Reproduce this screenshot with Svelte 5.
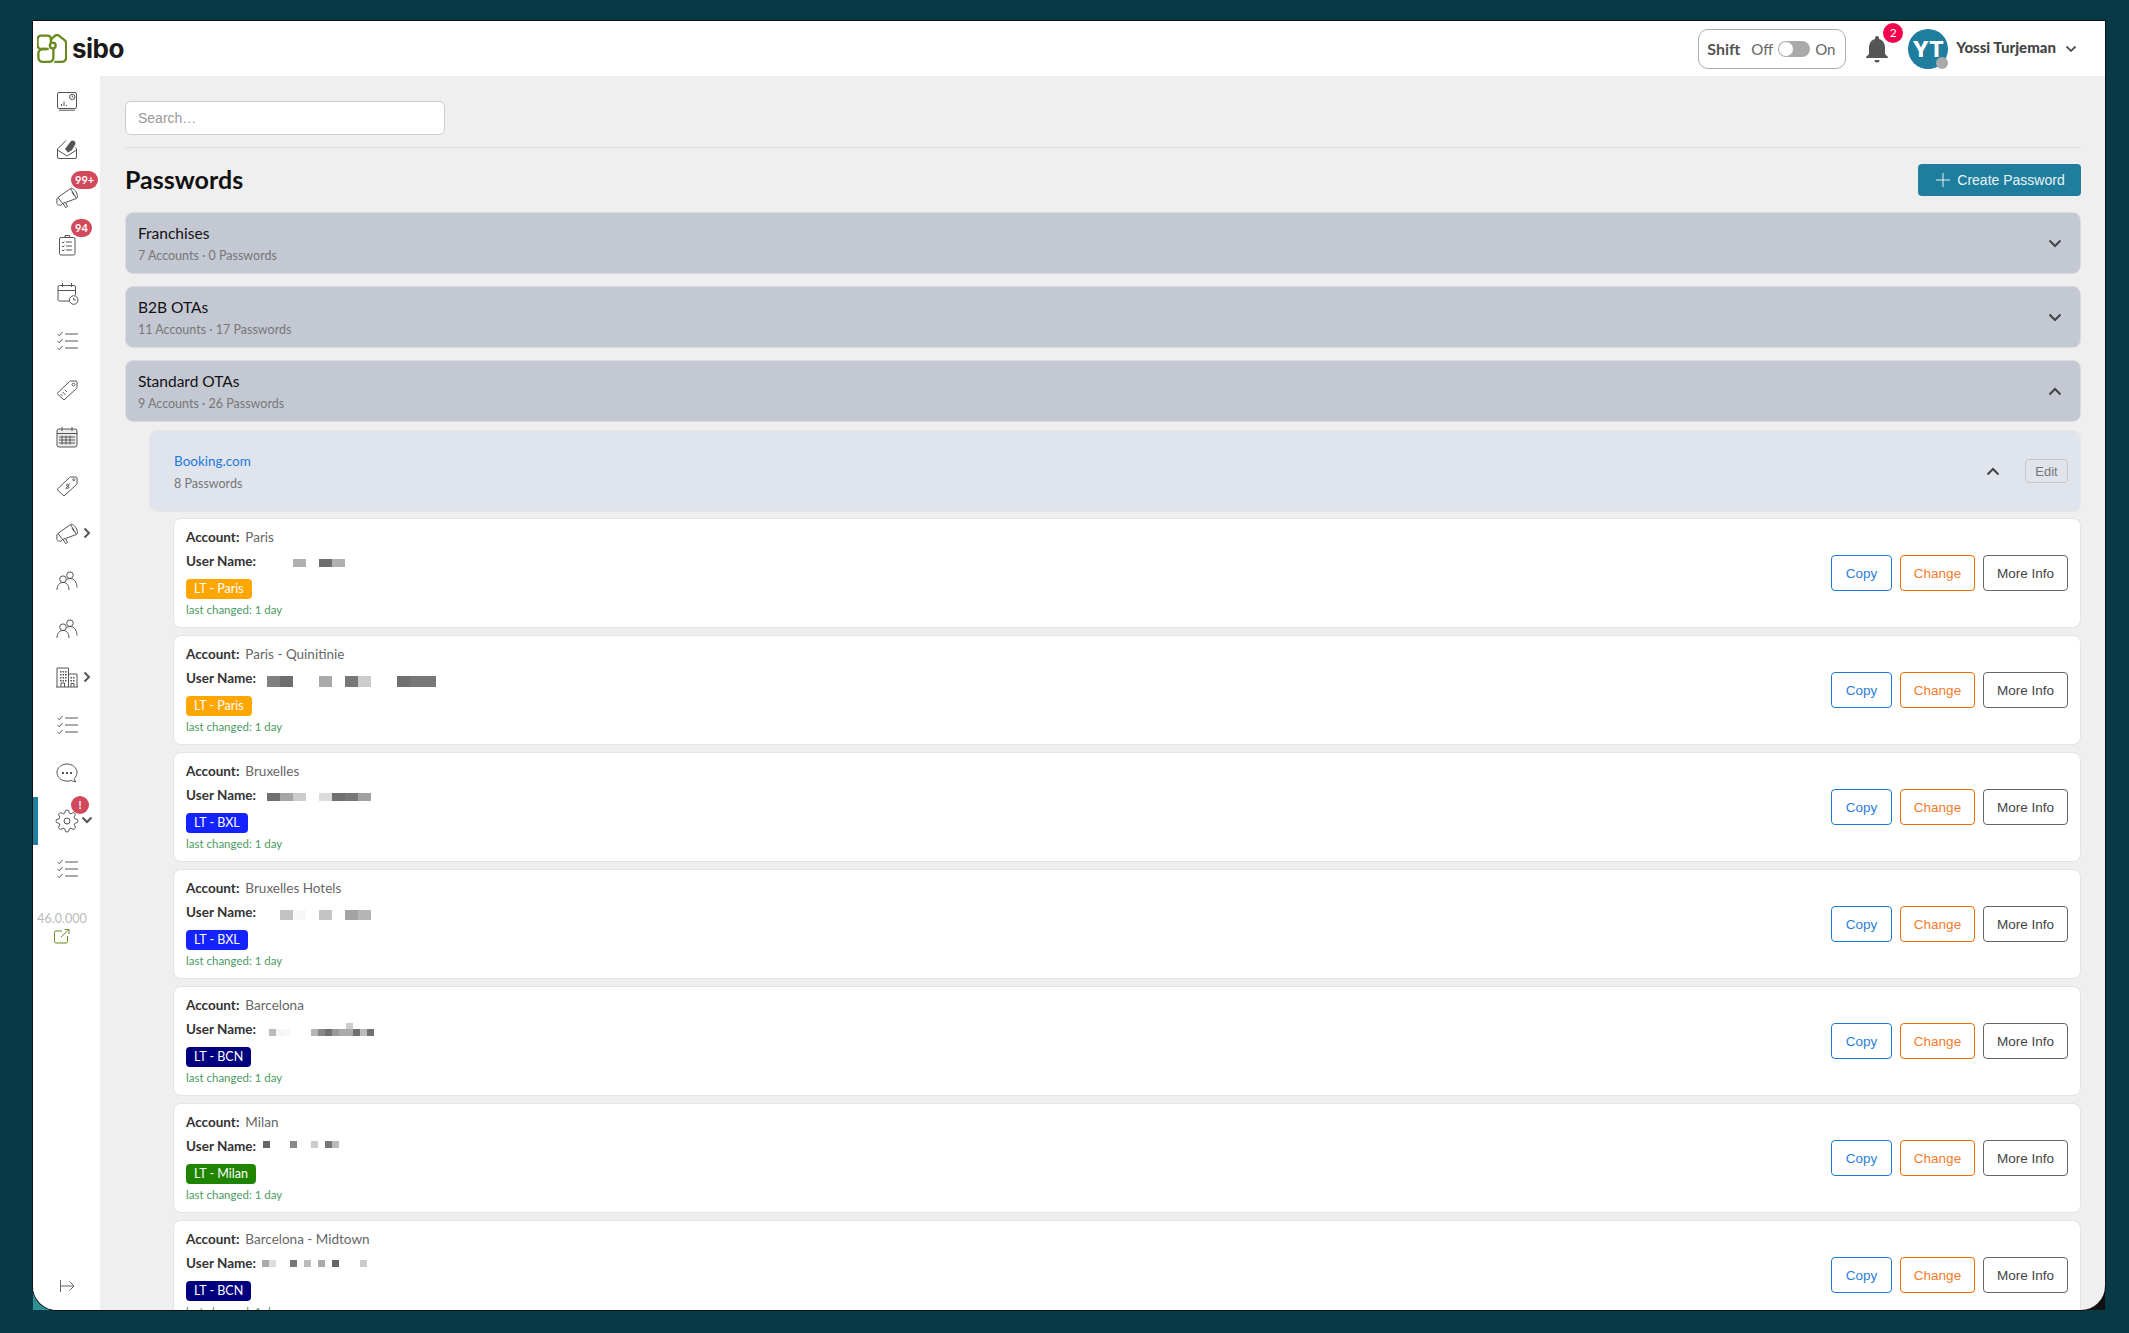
<script>
  const check = 'M10 5h13M10 12h13M10 19h13M2.500 5l1.700 1.700L7.500 3M2.500 12l1.700 1.700L7.500 10M2.500 19l1.700 1.700L7.500 17';
  const mega = 'M3 12.500L15.500 3.500l6 10L7.500 18.500zM15.500 3.500c1.500-1 4 1 5.500 3.500s2 5.500.500 6.500M3 12.500a3 3 0 0 0-1 3.500 3 3 0 0 0 5.500 2.500M8 18.500l2.500 4 2-1-2-4M17 7l2 3.500';
  const people = 'M2 21c0-5 2.500-7.500 6-7.500s6 2.500 6 7.500M8 13.500a3.300 3.300 0 1 0 0-6.600 3.300 3.300 0 0 0 0 6.600zM11.500 11c1-1 2.500-1.500 3.500-1.500 4 0 7 3.500 7 9M15 9.500a3.300 3.300 0 1 0 0-6.600 3.300 3.300 0 0 0 0 6.600z';
  const tagBase = 'M2 16.500L14.500 4.500a1.500 1.500 0 0 1 1-.5h5.500a1 1 0 0 1 1 1v5.500a1.500 1.500 0 0 1-.5 1L9 23z';
  const gear = 'M19.400 15a1.650 1.650 0 0 0 .33 1.820l.06.06a2 2 0 0 1 0 2.830 2 2 0 0 1-2.830 0l-.06-.06a1.650 1.650 0 0 0-1.820-.33 1.650 1.650 0 0 0-1 1.510V21a2 2 0 0 1-2 2 2 2 0 0 1-2-2v-.09A1.650 1.650 0 0 0 9 19.400a1.650 1.650 0 0 0-1.820.33l-.06.06a2 2 0 0 1-2.830 0 2 2 0 0 1 0-2.830l.06-.06a1.650 1.650 0 0 0 .33-1.820 1.650 1.650 0 0 0-1.510-1H3a2 2 0 0 1-2-2 2 2 0 0 1 2-2h.09A1.650 1.650 0 0 0 4.600 9a1.650 1.650 0 0 0-.33-1.820l-.06-.06a2 2 0 0 1 0-2.830 2 2 0 0 1 2.830 0l.06.06a1.650 1.650 0 0 0 1.820.33H9a1.650 1.650 0 0 0 1-1.510V3a2 2 0 0 1 2-2 2 2 0 0 1 2 2v.09a1.650 1.650 0 0 0 1 1.510 1.650 1.650 0 0 0 1.820-.33l.06-.06a2 2 0 0 1 2.830 0 2 2 0 0 1 0 2.830l-.06.06a1.650 1.650 0 0 0-.33 1.820V9a1.650 1.650 0 0 0 1.510 1H21a2 2 0 0 1 2 2 2 2 0 0 1-2 2h-.09a1.650 1.650 0 0 0-1.510 1zM15 12a3 3 0 1 1-6 0 3 3 0 1 1 6 0z';

  const nav = [
    { d: 'M2.500 5a1.500 1.500 0 0 1 1.500-1.500h16a1.500 1.500 0 0 1 1.500 1.500v13a1.500 1.500 0 0 1-1.500 1.500H4A1.500 1.500 0 0 1 2.500 18zM4 21.200h16M6.500 17v-2M9 17v-4.500M11.500 17v-1M20 8a2.700 2.700 0 1 1-5.400 0 2.700 2.700 0 0 1 5.400 0zM17.300 6.500V8l1 .5' },
    { d: 'M2.500 12v8a1.500 1.500 0 0 0 1.500 1.500h16a1.500 1.500 0 0 0 1.500-1.500v-8M2.500 12L11 3.500M2.500 13l9.500 6 9.500-6M21.500 12L20 10.500', fill: 'M10 12l6-8a3 3 0 0 1 4.500 3L17 13l-4 2.500z' },
    { d: mega, badge: '99+' },
    { d: 'M6 4.500h12.500A1.500 1.500 0 0 1 20 6v14.500a1.500 1.500 0 0 1-1.500 1.500H6a1.500 1.500 0 0 1-1.500-1.500V6A1.500 1.500 0 0 1 6 4.500zM10 4.500V2.500h4.500v2M11 9h6M11 13h6M11 17h6M7 9l1 1 1.500-1.500M7 13l1 1 1.500-1.500M7 17l1 1 1.500-1.500', badge: '94' },
    { d: 'M14 20H4.500A1.500 1.500 0 0 1 3 18.500V6a1.500 1.500 0 0 1 1.500-1.500h14.500A1.500 1.500 0 0 1 20.500 6v8M3 9.500h17.500M7.500 2v4M16.500 2v4M23 19a4.300 4.300 0 1 1-8.600 0 4.300 4.300 0 0 1 8.600 0zM18.700 16.800V19h2' },
    { d: check },
    { d: tagBase + 'M17.500 6.500a1 1 0 1 0 2 2 1 1 0 0 0-2-2zM7.500 15l3 3M10 13l2 2M5.500 17l2 2' },
    { d: 'M4 4h16a2 2 0 0 1 2 2v14a2 2 0 0 1-2 2H4a2 2 0 0 1-2-2V6a2 2 0 0 1 2-2zM2 8.500h20M7 2v4M17 2v4M4 12h16M4 15h16M4 18h16M7 10.500v9M11 10.500v9M15 10.500v9', tint: true },
    { d: tagBase + 'M18 6a1 1 0 1 0 1.500 1.500A1 1 0 0 0 18 6zM13.500 11.500c-1-1-2.700.2-1.800 1.300.8 1 2.700.300 2.300 1.800-.4 1-2 1-2.800.100M14.700 10.500l-4 5.500' },
    { d: mega, chev: 'right' },
    { d: people },
    { d: people },
    { d: 'M2 22V3h11.500v19M13.500 9H22v13M1 22h22M6 22v-4h3.500v4M16 22v-3.500h3V22', fill: 'M5 6h1.500v1.500H5zM7.500 6H9v1.500H7.500zM10 6h1.500v1.500H10zM5 9h1.500v1.500H5zM7.500 9H9v1.500H7.500zM10 9h1.500v1.500H10zM5 12h1.500v1.500H5zM7.500 12H9v1.500H7.500zM10 12h1.500v1.500H10zM5 15h1.500v1.500H5zM7.500 15H9v1.500H7.500zM10 15h1.500v1.500H10zM15.500 12H17v1.500h-1.500zM18 12h1.500v1.500H18zM15.500 15H17v1.500h-1.500zM18 15h1.500v1.500H18z', chev: 'right' },
    { d: check },
    { d: 'M12 3c5.500 0 10 3.800 10 8.500 0 2.500-1.200 4.500-2.800 6l1.500 3.500-4.700-1.500c-1.200.5-2.500.6-4 .6-5.500 0-10-3.800-10-8.600S6.500 3 12 3z', fill: 'M7 11h2v2H7zM11 11h2v2h-2zM15 11h2v2h-2z' },
    { d: gear, badge: '!', round: true, chev: 'down', active: true },
    { d: check }
  ];

  const cards = [
    { name: 'Paris', tag: 'LT - Paris', color: '#ffa600', m: [[31,8,13,8,'#b0b0b0'],[57,8,13,8,'#6e6e6e'],[70,8,13,8,'#b0b0b0']] },
    { name: 'Paris - Quinitinie', tag: 'LT - Paris', color: '#ffa600', m: [[5,8,13,11,'#808080'],[18,8,13,11,'#6e6e6e'],[57,8,13,11,'#aaa'],[83,8,13,11,'#777'],[96,8,13,11,'#ccc'],[135,8,13,11,'#707070'],[148,8,13,11,'#777'],[161,8,13,11,'#777']] },
    { name: 'Bruxelles', tag: 'LT - BXL', color: '#1322ff', m: [[5,8,13,8,'#707070'],[18,8,13,8,'#a5a5a5'],[31,8,13,8,'#ccc'],[57,8,13,8,'#dcdcdc'],[70,8,13,8,'#707070'],[83,8,13,8,'#777'],[96,8,13,8,'#a0a0a0']] },
    { name: 'Bruxelles Hotels', tag: 'LT - BXL', color: '#1322ff', m: [[18,8,13,10,'#c2c2c2'],[31,8,13,10,'#f7f7f7'],[57,8,13,10,'#c4c4c4'],[83,8,13,10,'#a3a3a3'],[96,8,13,10,'#b5b5b5']] },
    { name: 'Barcelona', tag: 'LT - BCN', color: '#00007f', m: [[7,10,7,7,'#bbb'],[14,10,7,7,'#f5f5f5'],[21,10,7,7,'#f8f8f8'],[49,10,7,7,'#b5b5b5'],[56,10,7,7,'#888'],[63,10,7,7,'#707070'],[70,10,7,7,'#999'],[77,10,7,7,'#aaa'],[84,10,7,7,'#aaa'],[84,4,7,6,'#ccc'],[91,10,7,7,'#707070'],[98,10,7,7,'#bbb'],[105,10,7,7,'#707070']] },
    { name: 'Milan', tag: 'LT - Milan', color: '#1f8500', m: [[1,5,7,7,'#666'],[28,5,7,7,'#888'],[49,5,7,7,'#ccc'],[63,5,7,7,'#777'],[70,5,7,7,'#bbb']] },
    { name: 'Barcelona - Midtown', tag: 'LT - BCN', color: '#00007f', m: [[0,7,7,7,'#aaa'],[7,7,7,7,'#ddd'],[28,7,7,7,'#777'],[42,7,7,7,'#bbb'],[56,7,7,7,'#aaa'],[70,7,7,7,'#666'],[98,7,7,7,'#ccc']] }
  ];
</script>

<div class="stage">
  <div class="shell">
    <div class="window">
      <header class="top">
        <div class="brand">
          <svg width="30" height="30" viewBox="0 0 28 28" fill="none" stroke="#6a8a1e" stroke-width="2.200" stroke-linecap="round" stroke-linejoin="round">
            <path d="M8 14H4a3.500 3.500 0 0 1-3.500-3.500V5A3.500 3.500 0 0 1 4 1.500h6a3 3 0 0 1 3 3v3" />
            <circle cx="14.700" cy="10.700" r="2.700" />
            <path d="M13 5l4-3.500q1.700-1.200 3.400 0L26 6q1.200 1.200 1.200 3v13a4 4 0 0 1-4 4H17" />
            <path d="M1.300 18a4 4 0 0 1 4-4H10M1.300 18v4a4 4 0 0 0 4 4h6a4 4 0 0 0 4-4v-8" />
          </svg>
          <span class="wordmark">sibo</span>
        </div>
        <div class="tools">
          <div class="shift">
            <b>Shift</b><span class="off">Off</span><span class="toggle"><i></i></span><span>On</span>
          </div>
          <div class="bell">
            <svg width="24" height="28" viewBox="0 0 24 28" fill="#555"><path d="M12 1a2 2 0 0 1 2 2v1c4 1 6 4.500 6 9v6l3 3v1H1v-1l3-3v-6c0-4.500 2-8 6-9V3a2 2 0 0 1 2-2zM9.500 25h5a2.500 2.500 0 0 1-5 0z" /></svg>
            <span class="bell-badge">2</span>
          </div>
          <div class="avatar">YT<span class="status"></span></div>
          <span class="user">Yossi Turjeman</span>
          <svg class="user-chev" width="12" height="8" viewBox="0 0 12 8" fill="none" stroke="#555" stroke-width="1.800"><path d="M1.500 1.500L6 6l4.500-4.500" /></svg>
        </div>
      </header>

      <div class="body">
        <nav class="side">
          {#each nav as item}
            <div class="nav-item">
              {#if item.active}<span class="active-bar"></span>{/if}
              <svg width="24" height="24" viewBox="0 0 24 24" fill="none" stroke="#555" stroke-width="1">
                <path d={item.d} fill={item.tint ? '#ececec' : 'none'} />
                {#if item.fill}<path d={item.fill} fill="#555" stroke="none" />{/if}
              </svg>
              {#if item.badge}<span class="nav-badge" class:round={item.round}>{item.badge}</span>{/if}
              {#if item.chev === 'right'}
                <svg class="nav-chev" width="10" height="12" viewBox="0 0 10 12" fill="none" stroke="#555" stroke-width="2"><path d="M2.500 1.500L7 6l-4.500 4.500" /></svg>
              {:else if item.chev === 'down'}
                <svg class="nav-chev down" width="12" height="10" viewBox="0 0 12 10" fill="none" stroke="#555" stroke-width="2"><path d="M1.500 2.500L6 7l4.500-4.500" /></svg>
              {/if}
            </div>
          {/each}
          <div class="version">
            <div>46.0.000</div>
            <svg width="16" height="15" viewBox="0 0 16 15" fill="none" stroke="#6a8a1e" stroke-width="1"><path d="M8 2H2a1.500 1.500 0 0 0-1.500 1.500v9A1.500 1.500 0 0 0 2 14h10a1.500 1.500 0 0 0 1.500-1.500V7M7 8l8-7.500M10.500.5H15V5" /></svg>
          </div>
          <div class="collapse">
            <svg width="16" height="14" viewBox="0 0 16 14" fill="none" stroke="#666" stroke-width="1"><path d="M1.500 1v12M1.500 7H15M10.500 2.500L15 7l-4.500 4.500" /></svg>
          </div>
        </nav>

        <main class="main">
          <input class="search" placeholder="Search…" />
          <hr class="rule" />
          <div class="title-row">
            <h1>Passwords</h1>
            <button class="create">
              <svg width="14" height="14" viewBox="0 0 14 14" stroke="#e8f4f8" stroke-width="1" fill="none"><path d="M7 0v14M0 7h14" /></svg>
              Create Password
            </button>
          </div>

          <section class="group">
            <div><div class="g-title">Franchises</div><div class="g-sub">7 Accounts · 0 Passwords</div></div>
            <svg width="14" height="9" viewBox="0 0 14 9" fill="none" stroke="#444" stroke-width="2"><path d="M1.500 1.500L7 7l5.500-5.500" /></svg>
          </section>
          <section class="group">
            <div><div class="g-title">B2B OTAs</div><div class="g-sub">11 Accounts · 17 Passwords</div></div>
            <svg width="14" height="9" viewBox="0 0 14 9" fill="none" stroke="#444" stroke-width="2"><path d="M1.500 1.500L7 7l5.500-5.500" /></svg>
          </section>
          <section class="group">
            <div><div class="g-title">Standard OTAs</div><div class="g-sub">9 Accounts · 26 Passwords</div></div>
            <svg width="14" height="9" viewBox="0 0 14 9" fill="none" stroke="#444" stroke-width="2"><path d="M1.500 7.500L7 2l5.500 5.500" /></svg>
          </section>

          <section class="sub">
            <div><div class="s-title">Booking.com</div><div class="s-sub">8 Passwords</div></div>
            <svg class="s-chev" width="14" height="9" viewBox="0 0 14 9" fill="none" stroke="#444" stroke-width="2"><path d="M1.500 7.500L7 2l5.500 5.500" /></svg>
            <button class="edit">Edit</button>
          </section>

          <div class="cards">
            {#each cards as c}
              <article class="card">
                <div class="info">
                  <div class="line"><b>Account:</b><span class="val">{c.name}</span></div>
                  <div class="line"><b>User Name:</b>
                    <svg class="mosaic" width="180" height="20" aria-hidden="true">
                      {#each c.m as r}<rect x={r[0]} y={r[1]} width={r[2]} height={r[3]} fill={r[4]} />{/each}
                    </svg>
                  </div>
                  <span class="tag" style:background={c.color}>{c.tag}</span>
                  <div class="changed">last changed: 1 day</div>
                </div>
                <div class="actions">
                  <button class="btn copy">Copy</button>
                  <button class="btn change">Change</button>
                  <button class="btn more">More Info</button>
                </div>
              </article>
            {/each}
          </div>
        </main>
      </div>
    </div>
  </div>
</div>

<style>
  :global(body) { margin: 0; background: #073947; }
  .stage { width: 2129px; height: 1333px; box-sizing: border-box; padding: 21px 24px 23px 33px; font-family: "Lato", "Noto Sans", sans-serif; color: #333; }
  .shell { height: 100%; background: linear-gradient(90deg, #2f9094 0 50%, #111 50%); }
  .window { height: 100%; display: flex; flex-direction: column; overflow: hidden; background: #efefef; border-radius: 0 0 24px 24px; box-shadow: 0 0 0 1px #111; }

  .top { height: 55px; flex: none; background: #fff; display: flex; align-items: center; justify-content: space-between; padding: 0 28px 0 4px; box-sizing: border-box; }
  .brand { display: flex; align-items: center; gap: 5px; }
  .wordmark { font-family: "Inter", sans-serif; font-weight: 700; font-size: 26px; color: #1a1a1a; letter-spacing: -0.5px; line-height: 30px; }
  .tools { display: flex; align-items: center; }
  .shift { width: 148px; height: 40px; box-sizing: border-box; border: 1px solid #aaa; border-radius: 10px; display: flex; align-items: center; padding: 0 8px; font-size: 15px; color: #666; }
  .shift b { color: #555; font-weight: 700; font-size: 16px; margin-right: 11px; }
  .off { margin-right: 5px; }
  .toggle { width: 32px; height: 16px; border-radius: 8px; background: #aaa; display: block; margin-right: 5px; }
  .toggle i { display: block; width: 14px; height: 14px; margin: 1px; border-radius: 50%; background: #fff; }
  .bell { position: relative; margin-left: 19px; height: 28px; }
  .bell-badge { position: absolute; left: 18px; top: -12px; width: 20px; height: 20px; border-radius: 50%; background: #f5004f; color: #fff; font-size: 12px; line-height: 20px; text-align: center; }
  .avatar { position: relative; width: 40px; height: 40px; margin-left: 19px; border-radius: 50%; background: #1f7d9e; color: #fff; font: 800 22px/40px "Inter", sans-serif; text-align: center; }
  .status { position: absolute; right: 0; bottom: 0; width: 12px; height: 12px; border-radius: 50%; background: #aaa; }
  .user { margin-left: 8px; font-weight: 900; font-size: 15px; color: #444; position: relative; top: -2px; }
  .user-chev { margin-left: 9px; }

  .body { flex: 1; display: flex; min-height: 0; }
  .side { width: 67px; flex: none; background: #fff; display: flex; flex-direction: column; padding-top: 1px; box-sizing: border-box; }
  .nav-item { height: 48px; flex: none; position: relative; display: flex; align-items: center; justify-content: center; }
  .active-bar { position: absolute; left: 0; top: 0; width: 5px; height: 48px; background: #1f7d9e; }
  .nav-badge { position: absolute; left: 38px; top: -2px; height: 18px; min-width: 12px; padding: 0 4px; border-radius: 9px; background: #d1495b; color: #fff; font-weight: 700; font-size: 11px; line-height: 18px; }
  .nav-badge.round { width: 18px; min-width: 0; padding: 0; text-align: center; top: -1px; }
  .nav-chev { position: absolute; left: 49px; top: 18px; }
  .nav-chev.down { left: 48px; }
  .version { margin-top: 19px; padding-right: 9px; text-align: center; color: #bbb; font-size: 12.500px; line-height: 14px; }
  .version svg { display: block; margin: 3px auto 0; }
  .collapse { margin-top: auto; height: 48px; display: flex; align-items: center; justify-content: center; }

  .main { flex: 1; min-width: 0; overflow: hidden; padding: 25px 24px 0 25px; box-sizing: border-box; }
  .search { display: block; width: 320px; height: 34px; box-sizing: border-box; padding: 0 12px; border: 1px solid #ccc; border-radius: 6px; background: #fff; font: 14px "Liberation Sans", sans-serif; outline: none; }
  .search::placeholder { color: #999; }
  .rule { border: 0; border-top: 1px solid #ddd; margin: 12px 0 0; }
  .title-row { display: flex; align-items: center; justify-content: space-between; margin-top: 16px; height: 32px; }
  h1 { margin: 0 0 2px; font-size: 25px; font-weight: 700; color: #111; }
  .create { width: 163px; height: 32px; background: #1f7d9e; border: 0; border-radius: 4px; color: #e8f4f8; font: 14px "Liberation Sans", sans-serif; display: flex; align-items: center; justify-content: center; gap: 7px; padding: 0 0 0 2px; }

  .group { height: 62px; box-sizing: border-box; margin-top: 12px; background: #c4c8d3; border: 1px solid #dcdde2; border-radius: 8px; display: flex; align-items: center; justify-content: space-between; padding: 0 18px 0 12px; }
  .title-row + .group { margin-top: 16px; }
  .g-title { font-size: 15.500px; line-height: 20px; color: #111; margin-bottom: 5px; }
  .g-sub { font-size: 12.500px; line-height: 16px; color: #777; }

  .sub { margin: 8px 0 0 24px; height: 82px; box-sizing: border-box; background: #e0e4ec; border: 1px solid #e6e6e6; border-radius: 8px; display: flex; align-items: center; padding: 0 12px 0 24px; }
  .sub > div { flex: 1; }
  .s-title { font-size: 13.500px; line-height: 20px; color: #1f78e0; margin-bottom: 5px; }
  .s-sub { font-size: 12.500px; line-height: 16px; color: #777; }
  .s-chev { margin-right: 25px; }
  .edit { width: 43px; height: 24px; padding: 0; background: transparent; border: 1px solid #c8c8c8; border-radius: 4px; color: #777; font: 13px "Liberation Sans", sans-serif; }

  .cards { margin: 6px 0 0 48px; display: flex; flex-direction: column; gap: 7px; }
  .card { height: 110px; flex: none; box-sizing: border-box; background: #fff; border: 1px solid #e4e4e4; border-radius: 8px; display: flex; align-items: center; justify-content: space-between; padding: 0 12px 0 12px; }
  .info { align-self: flex-start; padding-top: 6px; }
  .line { height: 24px; display: flex; align-items: center; font-size: 13.500px; }
  .line b { font-weight: 700; color: #333; }
  .val { margin-left: 6px; color: #666; }
  .mosaic { margin-left: 6px; display: block; }
  .tag { display: inline-block; height: 20px; margin-top: 6px; padding: 0 8px; border-radius: 4px; color: #fff; font-size: 12.500px; line-height: 20px; vertical-align: top; }
  .changed { margin-top: 4px; font-size: 11.500px; line-height: 14px; color: #4b9a5f; }
  .actions { display: flex; gap: 8px; }
  .btn { height: 36px; padding: 0; background: #fff; border-radius: 4px; font: 13.500px "Liberation Sans", sans-serif; border: 1px solid; }
  .copy { width: 61px; color: #2b7ed8; border-color: #1f78d8; }
  .change { width: 75px; color: #f47c2c; border-color: #ef6c00; }
  .more { width: 85px; color: #444; border-color: #666; }
</style>
